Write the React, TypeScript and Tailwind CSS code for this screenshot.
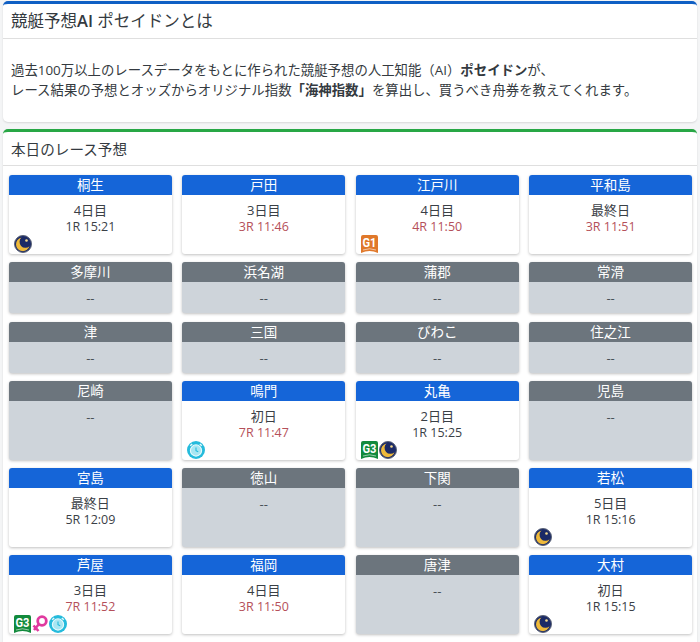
const FONT = "font-['Open_Sans','Noto_Sans_CJK_JP',sans-serif]";

type IconName = "moon" | "alarm" | "g1" | "g3" | "venus";

type Stadium = {
  name: string;
  day?: string;
  race?: string;
  soon?: boolean;
  icons?: IconName[];
};

const stadiums: Stadium[] = [
  { name: "桐生", day: "4日目", race: "1R 15:21", icons: ["moon"] },
  { name: "戸田", day: "3日目", race: "3R 11:46", soon: true },
  { name: "江戸川", day: "4日目", race: "4R 11:50", soon: true, icons: ["g1"] },
  { name: "平和島", day: "最終日", race: "3R 11:51", soon: true },
  { name: "多摩川" },
  { name: "浜名湖" },
  { name: "蒲郡" },
  { name: "常滑" },
  { name: "津" },
  { name: "三国" },
  { name: "びわこ" },
  { name: "住之江" },
  { name: "尼崎" },
  { name: "鳴門", day: "初日", race: "7R 11:47", soon: true, icons: ["alarm"] },
  { name: "丸亀", day: "2日目", race: "1R 15:25", icons: ["g3", "moon"] },
  { name: "児島" },
  { name: "宮島", day: "最終日", race: "5R 12:09" },
  { name: "徳山" },
  { name: "下関" },
  { name: "若松", day: "5日目", race: "1R 15:16", icons: ["moon"] },
  { name: "芦屋", day: "3日目", race: "7R 11:52", soon: true, icons: ["g3", "venus", "alarm"] },
  { name: "福岡", day: "4日目", race: "3R 11:50", soon: true },
  { name: "唐津" },
  { name: "大村", day: "初日", race: "1R 15:15", icons: ["moon"] },
];

function GradeBadge({ label, color }: { label: string; color: string }) {
  return (
    <svg width="17" height="18" viewBox="0 0 17 18" className="shrink-0">
      <path d="M2 0h13a2 2 0 0 1 2 2v16q-8.500-4-17 0V2a2 2 0 0 1 2-2z" fill={color} />
      <path d="M2 15q6.500-2.500 13 0" fill="none" stroke="#fff" strokeOpacity="0.7" strokeWidth="0.800" />
      <text x="8.500" y="12" textAnchor="middle" fontSize="12" fontWeight="700" fill="#fff" textLength="14" lengthAdjust="spacingAndGlyphs" fontFamily="Roboto, sans-serif">
        {label}
      </text>
    </svg>
  );
}

function RaceIcon({ name }: { name: IconName }) {
  if (name === "g1") return <GradeBadge label="G1" color="#e0782a" />;
  if (name === "g3") return <GradeBadge label="G3" color="#128a3c" />;
  if (name === "moon") {
    return (
      <svg width="18" height="18" viewBox="0 0 18 18" className="shrink-0">
        <circle cx="9" cy="9" r="8.500" fill="#1b2a66" stroke="#5c6478" strokeWidth="1" />
        <path d="M7.500 2.500a6.900 6.900 0 1 0 8 8.800A5.800 5.800 0 0 1 7.500 2.500z" fill="#eeb93a" />
        <circle cx="12.500" cy="5.500" r="1.300" fill="#f5d98a" />
      </svg>
    );
  }
  if (name === "venus") {
    return (
      <svg width="16" height="18" viewBox="0 0 16 18" className="shrink-0">
        <circle cx="10" cy="6" r="4.300" fill="none" stroke="#e0399f" strokeWidth="2.800" />
        <path d="M7 9 2 15M1.500 10.500 6.500 16" fill="none" stroke="#e0399f" strokeWidth="2.600" />
      </svg>
    );
  }
  return (
    <svg width="18" height="18" viewBox="0 0 18 18" className="shrink-0">
      <circle cx="9" cy="9" r="9" fill="#25bbdc" />
      <circle cx="9" cy="9.500" r="5.600" fill="#a8e6f2" stroke="#e6f9fc" strokeWidth="1.100" />
      <path d="M9 6.500v3.200l2.200 1" fill="none" stroke="#25bbdc" strokeWidth="1.100" />
      <path d="M3.200 4.800 5.200 3M14.800 4.800 12.800 3" stroke="#e6f9fc" strokeWidth="1.400" />
    </svg>
  );
}

function StadiumCard({ stadium }: { stadium: Stadium }) {
  const open = !!stadium.day;
  return (
    <div className={`flex flex-col overflow-hidden rounded-[3px] shadow-[0_1px_3px_rgba(0,0,0,0.25)] ${open ? "bg-white" : "bg-[#ced4da]"}`}>
      <div className={`h-5 text-center text-[13.500px] leading-5 text-white ${open ? "bg-[#1565d8]" : "bg-[#6c757d]"}`}>
        {stadium.name}
      </div>
      <div className={`flex flex-1 flex-col text-center ${open ? "pt-[7px]" : "pt-2"}`}>
        {open ? (
          <>
            <div className="text-[13px] leading-[17px] text-[#3a4046]">{stadium.day}</div>
            <div className={`text-[12.500px] leading-[15px] ${stadium.soon ? "text-[#b5505a]" : "text-[#3a4046]"}`}>{stadium.race}</div>
            <div className="mt-auto flex h-[19.500px] items-center gap-px pl-[5px]">
              {stadium.icons?.map((icon, i) => <RaceIcon key={i} name={icon} />)}
            </div>
          </>
        ) : (
          <div className="pb-[7px] text-[13px] leading-4 text-[#495057]">--</div>
        )}
      </div>
    </div>
  );
}

export default function App() {
  return (
    <div className={`${FONT} flex h-[642px] flex-col gap-[7px] overflow-hidden bg-[#f4f5f6] px-[3px] pt-px text-[#343a40]`}>
      <section className="h-[121px] shrink-0 rounded-[5px] border-t-[3px] border-[#0f5fc4] bg-white shadow-[0_1px_2px_rgba(0,0,0,0.12)]">
        <h2 className="flex h-[35px] items-center border-b border-[#dfdfdf] px-2 text-[16.500px] font-normal">
          <span>競艇予想<b className="font-semibold">AI</b> ポセイドンとは</span>
        </h2>
        <p className="px-2 pt-[21px] text-[13.400px] leading-[20px]">
          過去100万以上のレースデータをもとに作られた競艇予想の人工知能（AI）<b>ポセイドン</b>が、
          <br />
          レース結果の予想とオッズからオリジナル指数<b>「海神指数」</b>を算出し、買うべき舟券を教えてくれます。
        </p>
      </section>

      <section className="flex-1 rounded-t-[5px] border-t-[3px] border-[#28a745] bg-white shadow-[0_1px_2px_rgba(0,0,0,0.12)]">
        <h2 className="flex h-[34px] items-center border-b border-[#dfdfdf] px-2 pt-[3px] text-[14.600px] font-normal">本日のレース予想</h2>
        <div className="grid grid-cols-4 gap-x-[10.670px] gap-y-[8.500px] pl-[6px] pr-[5px] pt-[9px]">
          {stadiums.map((stadium) => (
            <StadiumCard key={stadium.name} stadium={stadium} />
          ))}
        </div>
      </section>
    </div>
  );
}
